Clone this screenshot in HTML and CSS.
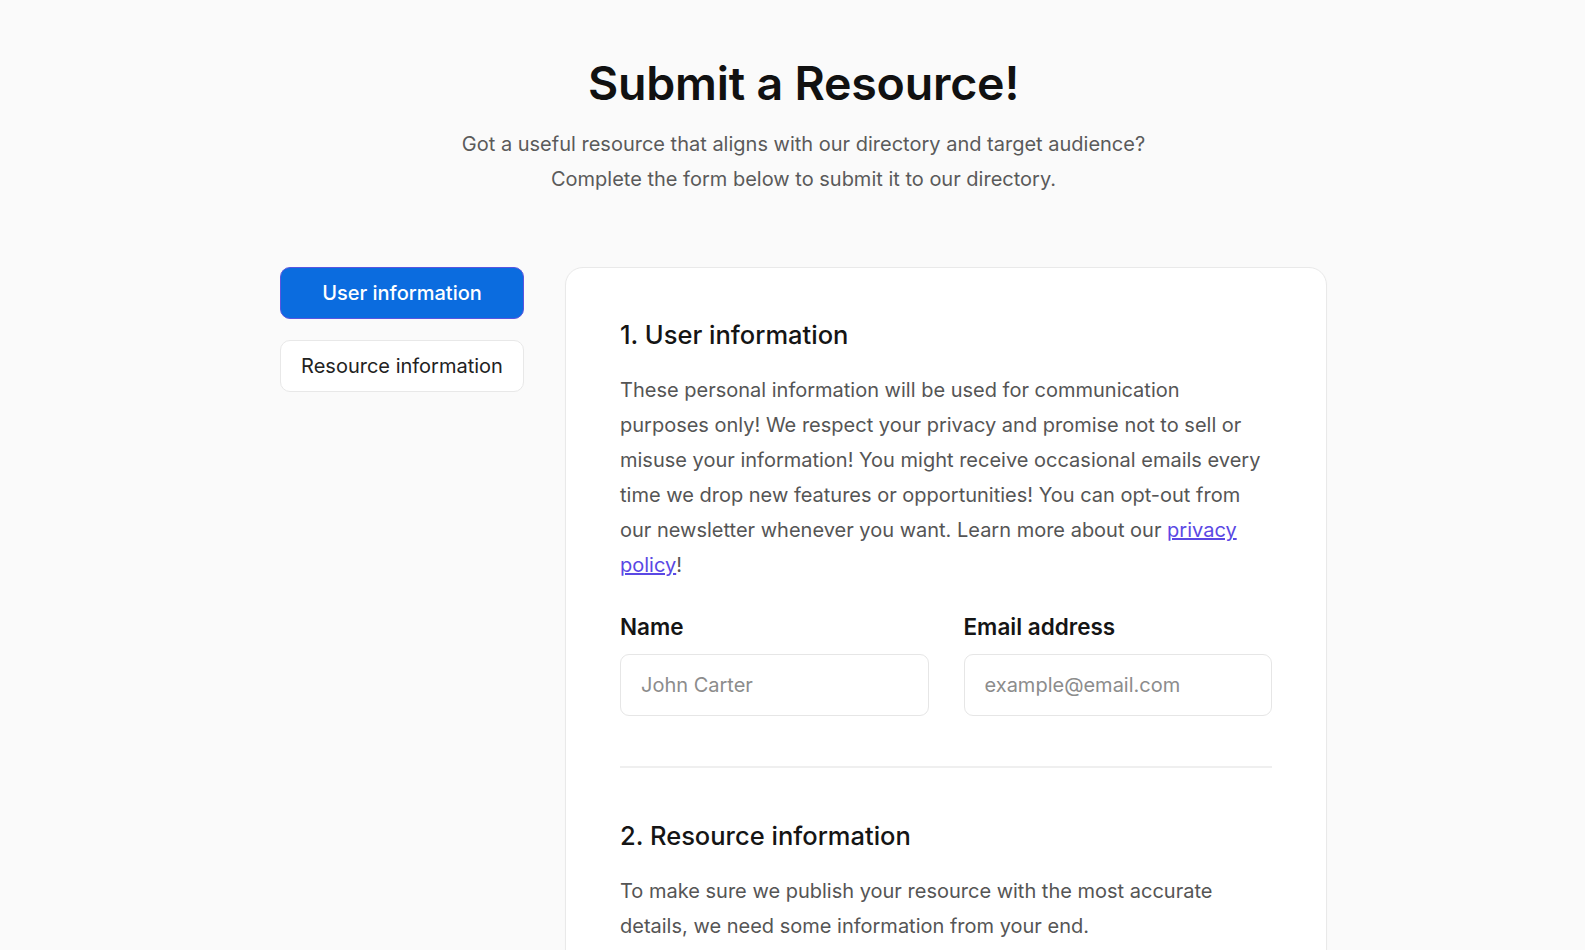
FILE: index.html
```html
<!DOCTYPE html>
<html lang="en">
<head>
<meta charset="utf-8">
<title>Submit a Resource!</title>
<link rel="stylesheet" href="styles.css">
</head>
<body>
<div class="page">
  <header class="hero">
    <h1 class="title">Submit a Resource!</h1>
    <p class="subtitle">Got a useful resource that aligns with our directory and target audience?<br>Complete the form below to submit it to our directory.</p>
  </header>
  <main class="layout">
    <nav class="side">
      <a class="tab tab-active" href="#user">User information</a>
      <a class="tab" href="#resource">Resource information</a>
    </nav>
    <section class="card">
      <h2 class="section-title" id="user">1. User information</h2>
      <p class="section-text">These personal information will be used for communication purposes only! We respect your privacy and promise not to sell or misuse your information! You might receive occasional emails every time we drop new features or opportunities! You can opt-out from our newsletter whenever you want. Learn more about our <a class="link" href="#">privacy policy</a>!</p>
      <div class="fields">
        <label class="field">
          <span class="label">Name</span>
          <input class="input" type="text" placeholder="John Carter">
        </label>
        <label class="field">
          <span class="label">Email address</span>
          <input class="input" type="email" placeholder="example@email.com">
        </label>
      </div>
      <hr class="divider">
      <h2 class="section-title" id="resource">2. Resource information</h2>
      <p class="section-text">To make sure we publish your resource with the most accurate details, we need some information from your end.</p>
    </section>
  </main>
</div>
</body>
</html>
```
FILE: styles.css
```css
* { box-sizing: border-box; }
html, body { margin: 0; padding: 0; }
body {
  background: #fafafa;
  font-family: Inter, "Noto Sans", "Liberation Sans", sans-serif;
  color: #111;
  overflow: hidden;
}
.page {
  padding-left: 22px;
}
.hero {
  text-align: center;
  padding-top: 54px;
}
.title {
  margin: 0;
  font-size: 46.5px;
  line-height: 58px;
  font-weight: 600;
  color: #111;
  letter-spacing: -0.2px;
}
.subtitle {
  margin: 15px 0 0;
  font-size: 20px;
  line-height: 35px;
  color: #5a5a5a;
}
.layout {
  width: 1047px;
  margin: 70px 0 0 258px;
  display: flex;
  align-items: flex-start;
  gap: 41px;
}
.side {
  width: 244px;
  flex: none;
  display: flex;
  flex-direction: column;
  gap: 21px;
}
.tab {
  display: flex;
  align-items: center;
  justify-content: center;
  height: 52px;
  border-radius: 10px;
  border: 1px solid #e8e8e8;
  background: #fff;
  color: #222;
  font-size: 20px;
  text-decoration: none;
}
.tab-active {
  background: #0b6cdf;
  border-color: #5a55e0;
  color: #fff;
  font-weight: 500;
}
.card {
  flex: 1 1 0;
  min-width: 0;
  background: #fff;
  border: 1px solid #e9e9e9;
  border-radius: 18px;
  padding: 51px 54px 40px;
  box-shadow: 0 1px 3px rgba(0,0,0,0.02);
  min-height: 800px;
}
.section-title {
  margin: 0;
  font-size: 25.5px;
  line-height: 32px;
  font-weight: 500;
  color: #151515;
}
.section-text {
  margin: 22px 0 0;
  font-size: 20px;
  line-height: 35px;
  color: #555;
}
.link {
  color: #5a48e4;
}
.fields {
  margin-top: 29px;
  display: grid;
  grid-template-columns: minmax(0, 1fr) minmax(0, 1fr);
  gap: 35px;
}
.field {
  display: flex;
  flex-direction: column;
  gap: 12px;
  min-width: 0;
}
.label {
  font-size: 22.5px;
  line-height: 30px;
  font-weight: 600;
  color: #151515;
}
.input {
  width: 100%;
  min-width: 0;
  height: 62px;
  border: 1px solid #e6e6e6;
  border-radius: 9px;
  padding: 0 20px;
  font-family: inherit;
  font-size: 20px;
  color: #222;
  background: #fff;
  outline: none;
}
.input::placeholder {
  color: #8c8c8c;
}
.divider {
  margin: 50px 0 0;
  border: 0;
  height: 2px;
  background: #efefef;
}
.divider + .section-title {
  margin-top: 52px;
}
```
